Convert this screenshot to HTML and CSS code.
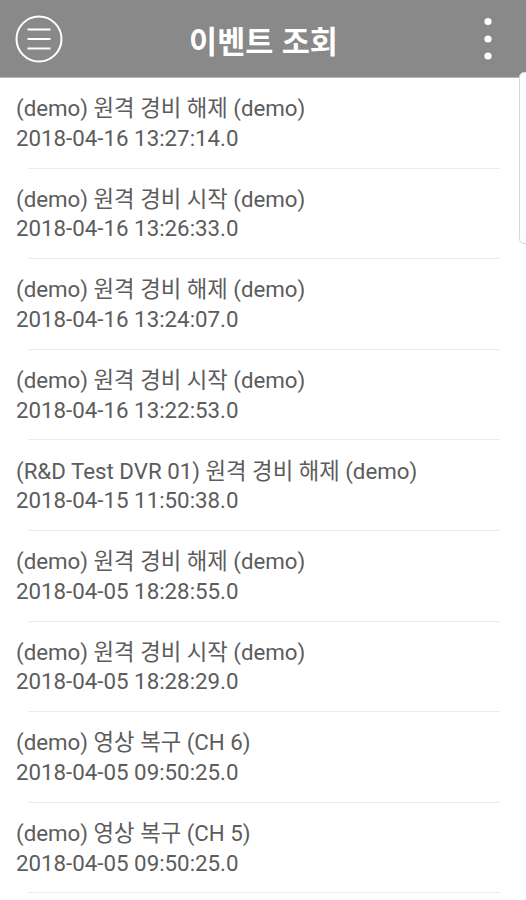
FILE: index.html
```html
<!DOCTYPE html>
<html lang="ko">
<head>
<meta charset="utf-8">
<title>이벤트 조회</title>
<link rel="stylesheet" href="styles.css">
</head>
<body>
<div class="app">
  <header class="topbar">
    <button class="icon-btn menu" aria-label="menu">
      <svg width="48" height="48" viewBox="0 0 48 48">
        <circle cx="24" cy="24" r="22.5" fill="none" stroke="#fff" stroke-width="2"/>
        <line x1="12.5" y1="14.5" x2="35.5" y2="14.5" stroke="#fff" stroke-width="2"/>
        <line x1="12.5" y1="24" x2="35.5" y2="24" stroke="#fff" stroke-width="2"/>
        <line x1="12.5" y1="33.5" x2="35.5" y2="33.5" stroke="#fff" stroke-width="2"/>
      </svg>
    </button>
    <h1 class="title">이벤트 조회</h1>
    <button class="icon-btn more" aria-label="more">
      <svg width="12" height="48" viewBox="0 0 12 48">
        <circle cx="6" cy="6.5" r="3.6" fill="#fff"/>
        <circle cx="6" cy="24" r="3.6" fill="#fff"/>
        <circle cx="6" cy="41" r="3.6" fill="#fff"/>
      </svg>
    </button>
  </header>
  <ul class="events">
    <li class="event"><div class="name">(demo) 원격 경비 해제 (demo)</div><div class="time">2018-04-16 13:27:14.0</div></li>
    <li class="event"><div class="name">(demo) 원격 경비 시작 (demo)</div><div class="time">2018-04-16 13:26:33.0</div></li>
    <li class="event"><div class="name">(demo) 원격 경비 해제 (demo)</div><div class="time">2018-04-16 13:24:07.0</div></li>
    <li class="event"><div class="name">(demo) 원격 경비 시작 (demo)</div><div class="time">2018-04-16 13:22:53.0</div></li>
    <li class="event"><div class="name">(R&amp;D Test DVR 01) 원격 경비 해제 (demo)</div><div class="time">2018-04-15 11:50:38.0</div></li>
    <li class="event"><div class="name">(demo) 원격 경비 해제 (demo)</div><div class="time">2018-04-05 18:28:55.0</div></li>
    <li class="event"><div class="name">(demo) 원격 경비 시작 (demo)</div><div class="time">2018-04-05 18:28:29.0</div></li>
    <li class="event"><div class="name">(demo) 영상 복구 (CH 6)</div><div class="time">2018-04-05 09:50:25.0</div></li>
    <li class="event"><div class="name">(demo) 영상 복구 (CH 5)</div><div class="time">2018-04-05 09:50:25.0</div></li>
  </ul>
  <div class="edge-handle"></div>
</div>
</body>
</html>
```
FILE: styles.css
```css
* { box-sizing: border-box; }
html, body {
  margin: 0;
  padding: 0;
  background: #fff;
}
body {
  font-family: Roboto, "Noto Sans CJK KR", sans-serif;
  width: 526px;
  height: 900px;
  overflow: hidden;
}
.app {
  position: relative;
  width: 526px;
  height: 900px;
  overflow: hidden;
}
.topbar {
  height: 78px;
  background: #898989;
  display: grid;
  grid-template-columns: 1fr auto 1fr;
  align-items: center;
  padding: 0 32px 0 15px;
  border-bottom: 1px solid #b9b9b9;
}
.icon-btn {
  background: none;
  border: 0;
  padding: 0;
  display: flex;
  align-items: center;
  justify-content: center;
}
.menu { width: 48px; height: 48px; justify-self: start; }
.more { width: 12px; height: 48px; justify-self: end; }
.title {
  margin: 0;
  font-family: "Noto Sans CJK KR", sans-serif;
  font-weight: 700;
  font-size: 30.5px;
  color: #fff;
  position: relative;
  left: 9px;
  top: 1px;
}
.events {
  list-style: none;
  margin: 0;
  padding: 0;
}
.event {
  padding: 16.25px 0 15.35px 16px;
  position: relative;
  font-size: 22.3px;
  line-height: 29.5px;
  color: #5c5c5c;
}
.event::after {
  content: "";
  position: absolute;
  left: 28px;
  right: 26px;
  bottom: 0;
  height: 1px;
  background: #ebebeb;
}
.event .name, .event .time {
  white-space: nowrap;
}
.edge-handle {
  position: absolute;
  left: 519px;
  top: 72px;
  width: 12px;
  height: 172px;
  background: #fff;
  border: 1px solid #d8d8d8;
  border-radius: 5px;
}
```
